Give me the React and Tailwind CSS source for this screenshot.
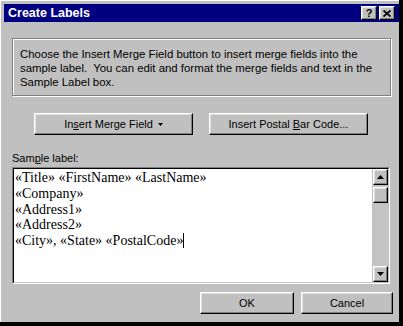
const raised =
  'border border-t-white border-l-white border-r-black border-b-black shadow-[inset_-1px_-1px_0_#808080,inset_1px_1px_0_#dfdfdf] bg-[#c0c0c0]';

function Btn({ className = '', children }) {
  return (
    <div className={`${raised} flex items-center justify-center h-[22px] text-[11px] text-black ${className}`}>
      {children}
    </div>
  );
}

function Arrow({ up }) {
  return (
    <svg width="7" height="4" viewBox="0 0 7 4">
      {up ? <path d="M3.5 0 L7 4 L0 4 Z" fill="black" /> : <path d="M0 0 L7 0 L3.5 4 Z" fill="black" />}
    </svg>
  );
}

function ScrollBar() {
  return (
    <div className="w-[16px] h-full flex flex-col bg-[#c4c4c4] border-l border-[#c0c0c0]">
      <div className={`${raised} h-[16px] flex items-center justify-center`}>
        <Arrow up />
      </div>
      <div className={`${raised} h-[16px] mt-[2px]`} />
      <div className="flex-1" />
      <div className={`${raised} h-[16px] flex items-center justify-center`}>
        <Arrow />
      </div>
    </div>
  );
}

const lines = [
  '«Title» «FirstName» «LastName»',
  '«Company»',
  '«Address1»',
  '«Address2»',
  '«City», «State» «PostalCode»',
];

export default function App() {
  return (
    <div
      className="w-[403px] h-[326px] bg-[#c0c0c0] border-r-4 border-b-4 border-black pl-1 pt-1 flex flex-col shadow-[inset_1px_1px_0_#ffffff]"
      style={{ fontFamily: '"Liberation Sans", Arial, sans-serif' }}
    >
      {/* title bar */}
      <div className="h-[18px] bg-[#000080] flex items-center pl-[4px] pr-[4px]">
        <span className="text-white font-bold text-[12.5px] leading-none">Create Labels</span>
        <div className="ml-auto flex gap-[2px]">
          <div className={`${raised} w-[16px] h-[14px] flex items-center justify-center text-[11px] font-bold leading-none text-black`}>
            ?
          </div>
          <div className={`${raised} w-[16px] h-[14px] flex items-center justify-center`}>
            <svg width="8" height="7" viewBox="0 0 8 7">
              <path d="M0.5 0.5 L7.5 6.5 M7.5 0.5 L0.5 6.5" stroke="black" strokeWidth="1.7" />
            </svg>
          </div>
        </div>
      </div>

      {/* body */}
      <div className="flex flex-col pl-[8px] pt-[16px]">
        <div className="w-[379px] h-[58px] border border-[#808080] shadow-[1px_1px_0_#ffffff,inset_1px_1px_0_#ffffff] pl-[7px] pt-[8px] text-[11.4px] leading-[14px] text-black">
          Choose the Insert Merge Field button to insert merge fields into the
          <br />
          sample label.&nbsp; You can edit and format the merge fields and text in the
          <br />
          Sample Label box.
        </div>

        <div className="flex gap-[16px] ml-[22px] mt-[17px]">
          <Btn className="w-[159px]">
            <span>
              In<span className="underline">s</span>ert Merge Field
            </span>
            <svg className="ml-[5px]" width="5" height="3" viewBox="0 0 5 3">
              <path d="M0 0 L5 0 L2.5 3 Z" fill="black" />
            </svg>
          </Btn>
          <Btn className="w-[159px]">
            <span>
              Insert Postal <span className="underline">B</span>ar Code...
            </span>
          </Btn>
        </div>

        <div className="mt-[16px] text-[11px] leading-[14px] text-black">
          Sam<span className="underline">p</span>le label:
        </div>

        <div className="mt-[2px] w-[378px] h-[117px] border border-t-[#808080] border-l-[#808080] border-r-white border-b-white">
          <div className="h-full flex border border-t-black border-l-black border-r-[#c0c0c0] border-b-[#c0c0c0] bg-white">
            <div
              className="flex-1 pl-[1px] pt-[1px] text-[14px] leading-[15.75px] text-black"
              style={{ fontFamily: '"Liberation Serif", "Times New Roman", serif' }}
            >
              {lines.map((l, i) => (
                <div key={i} className="flex items-center whitespace-pre">
                  {l}
                  {i === lines.length - 1 && <span className="inline-block w-[1px] h-[15px] bg-black" />}
                </div>
              ))}
            </div>
            <ScrollBar />
          </div>
        </div>

        <div className="flex gap-[7px] ml-[188px] mt-[8px]">
          <Btn className="w-[94px]">OK</Btn>
          <Btn className="w-[92px]">Cancel</Btn>
        </div>
      </div>
    </div>
  );
}
